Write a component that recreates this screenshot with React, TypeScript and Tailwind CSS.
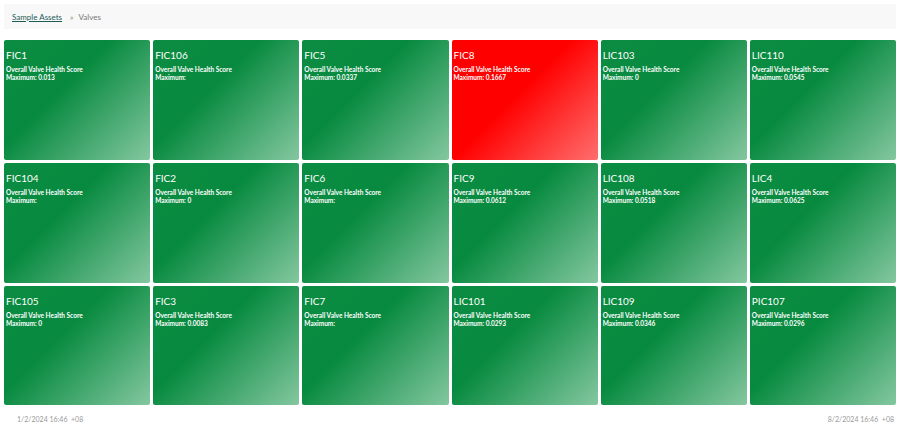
import React from "react";

type Tile = { name: string; max: string; red?: boolean };

const tiles: Tile[] = [
  { name: "FIC1", max: "0.013" },
  { name: "FIC106", max: "" },
  { name: "FIC5", max: "0.0337" },
  { name: "FIC8", max: "0.1667", red: true },
  { name: "LIC103", max: "0" },
  { name: "LIC110", max: "0.0545" },
  { name: "FIC104", max: "" },
  { name: "FIC2", max: "0" },
  { name: "FIC6", max: "" },
  { name: "FIC9", max: "0.0612" },
  { name: "LIC108", max: "0.0518" },
  { name: "LIC4", max: "0.0625" },
  { name: "FIC105", max: "0" },
  { name: "FIC3", max: "0.0083" },
  { name: "FIC7", max: "" },
  { name: "LIC101", max: "0.0293" },
  { name: "LIC109", max: "0.0346" },
  { name: "PIC107", max: "0.0296" },
];

export default function App() {
  return (
    <div
      className="w-[900px] h-[426px] bg-white flex flex-col overflow-hidden"
      style={{ fontFamily: "'Source Sans Pro', Lato, 'Noto Sans', sans-serif" }}
    >
      <div className="mx-[4px] mt-[4px] h-[25px] bg-[#f8f8f8] flex items-center pl-[8px] text-[8px] leading-none">
        <span className="text-[#1d5b57] underline">Sample Assets</span>
        <span className="text-[#888] ml-[8px]">»</span>
        <span className="text-[#777] ml-[5px]">Valves</span>
      </div>
      <div className="mx-[4px] mt-[11px] grid grid-cols-6 grid-rows-[120px_120px_119px] gap-[3px]">
        {tiles.map((t) => (
          <div
            key={t.name}
            className={
              "rounded-[2px] text-white px-[2px] pt-[9px] " +
              (t.red
                ? "bg-[linear-gradient(135deg,#ff0000_0%,#ff0000_45%,#ff6e6e_100%)]"
                : "bg-[linear-gradient(135deg,#0b8c42_0%,#078a3f_40%,#84c7a0_100%)]")
            }
          >
            <div className="text-[10px] leading-[12px]">{t.name}</div>
            <div className="mt-[5px] text-[6.5px] leading-[8px] font-bold">Overall Valve Health Score</div>
            <div className="text-[6.5px] leading-[8px] font-bold">Maximum: {t.max}</div>
          </div>
        ))}
      </div>
      <div className="flex justify-between mt-[11px] pl-[17px] pr-[6px] text-[7px] leading-none text-[#999]">
        <span>1/2/2024 16:46 &nbsp;+08</span>
        <span>8/2/2024 16:46 &nbsp;+08</span>
      </div>
    </div>
  );
}
